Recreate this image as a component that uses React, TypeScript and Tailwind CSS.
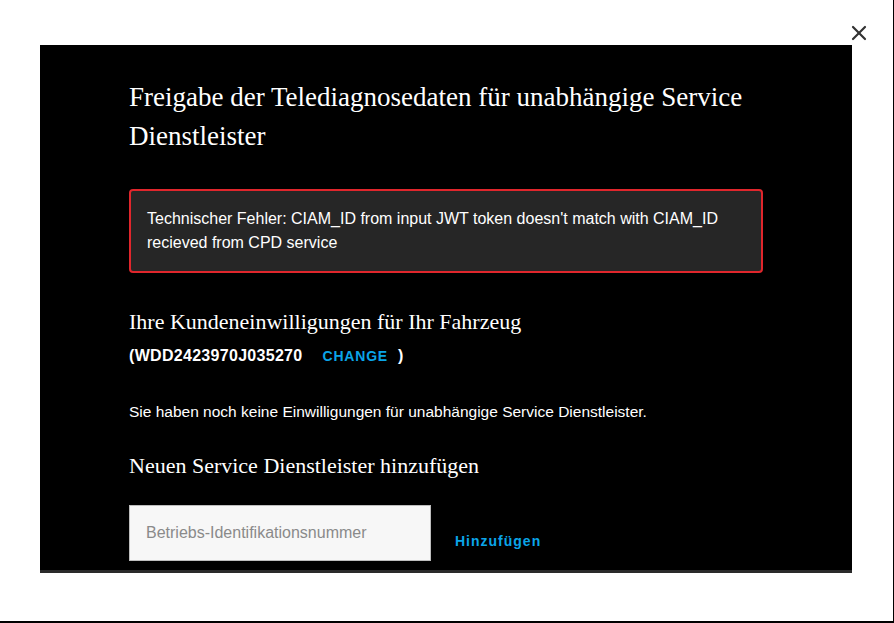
import { X } from "lucide-react";

const serif = "font-['Liberation_Serif','Times_New_Roman',serif]";
const sans = "font-['Liberation_Sans',Arial,sans-serif]";

function ErrorNotice({ message }: { message: string }) {
  return (
    <div className="mt-[33px] rounded-[4px] border-2 border-[#e0262c] bg-[#262626] px-[16px] py-[16px]">
      <p className="text-[16px] leading-[24px] text-white">{message}</p>
    </div>
  );
}

export default function App() {
  return (
    <div className={`relative h-[623px] w-[894px] overflow-hidden border-r border-b-2 border-black bg-white ${sans}`}>
      <button
        type="button"
        aria-label="Schließen"
        className="absolute left-[847px] top-[21px] flex h-[24px] w-[24px] items-center justify-center text-[#333]"
      >
        <X size={26} strokeWidth={2.2} />
      </button>

      <div className="ml-[40px] mt-[45px] h-[528px] w-[812px] overflow-hidden border-b-[3px] border-[#2a2a2a] bg-black">
        <div className="px-[89px] pt-[33px]">
          <h1 className={`${serif} text-[27px] leading-[39px] text-white`}>
            Freigabe der Telediagnosedaten für unabhängige Service Dienstleister
          </h1>

          <ErrorNotice message="Technischer Fehler: CIAM_ID from input JWT token doesn't match with CIAM_ID recieved from CPD service" />

          <h2 className={`${serif} mt-[33px] text-[22px] leading-[32px] text-white`}>
            Ihre Kundeneinwilligungen für Ihr Fahrzeug
          </h2>
          <div className="mt-[7px] flex items-center text-[16px] font-bold leading-[22px] text-white">
            <span className="tracking-[0.3px]">(WDD2423970J035270</span>
            <button type="button" className="ml-[20px] text-[14px] tracking-[0.8px] text-[#0aa5e8]">
              CHANGE
            </button>
            <span className="ml-[10px]">)</span>
          </div>

          <p className="mt-[35px] text-[15.5px] leading-[20px] text-white">
            Sie haben noch keine Einwilligungen für unabhängige Service Dienstleister.
          </p>

          <h2 className={`${serif} mt-[28px] text-[22px] leading-[32px] text-white`}>
            Neuen Service Dienstleister hinzufügen
          </h2>

          <div className="mt-[23px] flex items-end">
            <input
              type="text"
              placeholder="Betriebs-Identifikationsnummer"
              className="h-[56px] w-[302px] border border-[#bdbdbd] bg-[#f7f7f7] px-[16px] text-[16px] text-[#333] placeholder:text-[#8a8a8a] outline-none"
            />
            <button
              type="button"
              className="mb-[9px] ml-[24px] text-[14px] font-bold tracking-[1px] text-[#0aa5e8]"
            >
              Hinzufügen
            </button>
          </div>
        </div>
      </div>
    </div>
  );
}
